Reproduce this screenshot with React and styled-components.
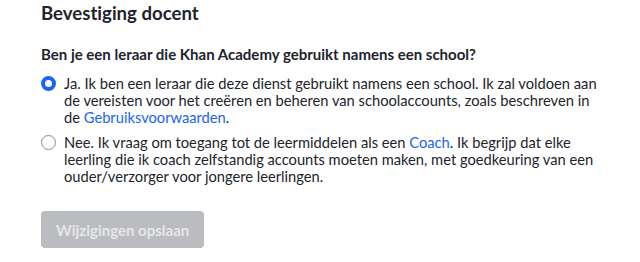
import React, { useState } from "react";
import styled, { createGlobalStyle } from "styled-components";

const GlobalStyle = createGlobalStyle`
  body {
    margin: 0;
    background: #fff;
    font-family: Lato, "Liberation Sans", sans-serif;
    font-variant-ligatures: none;
    color: #21242c;
  }
`;

const Page = styled.div`
  padding: 1px 37px 0 41px;
`;

const Title = styled.h2`
  margin: 0;
  font-size: 18.6px;
  line-height: 24px;
  font-weight: 700;
`;

const Question = styled.p`
  margin: 19px 0 0;
  font-size: 15px;
  line-height: 20px;
  font-weight: 700;
`;

const Options = styled.div`
  display: flex;
  flex-direction: column;
  gap: 8px;
  margin-top: 11px;
`;

const Option = styled.label`
  display: flex;
  gap: 8px;
  align-items: flex-start;
  font-size: 14.7px;
  line-height: 17px;
  cursor: pointer;
`;

const Radio = styled.span`
  flex: none;
  box-sizing: border-box;
  width: 15px;
  height: 15px;
  margin-top: 1px;
  border-radius: 50%;
  border: ${(p) => (p.$checked ? "4px solid #1865f2" : "1px solid #8a8c91")};
  background: #fff;
`;

const Link = styled.a`
  color: #1865f2;
  text-decoration: none;
`;

const SaveButton = styled.button`
  margin-top: 26px;
  height: 37px;
  padding: 0 15px;
  border: none;
  border-radius: 4px;
  background: #bbbcbf;
  color: #e6e7e9;
  font-family: Lato, "Liberation Sans", sans-serif;
  font-size: 15px;
  font-weight: 700;
  cursor: default;
`;

export default function App() {
  const [choice, setChoice] = useState("ja");

  return (
    <Page>
      <GlobalStyle />
      <Title>Bevestiging docent</Title>
      <Question>Ben je een leraar die Khan Academy gebruikt namens een school?</Question>
      <Options>
        <Option onClick={() => setChoice("ja")}>
          <Radio $checked={choice === "ja"} />
          <span>
            Ja. Ik ben een leraar die deze dienst gebruikt namens een school. Ik zal voldoen aan
            de vereisten voor het creëren en beheren van schoolaccounts, zoals beschreven in
            de <Link href="#">Gebruiksvoorwaarden</Link>.
          </span>
        </Option>
        <Option onClick={() => setChoice("nee")}>
          <Radio $checked={choice === "nee"} />
          <span>
            Nee. Ik vraag om toegang tot de leermiddelen als een <Link href="#">Coach</Link>. Ik
            begrijp dat elke leerling die ik coach zelfstandig accounts moeten maken, met
            goedkeuring van een ouder/verzorger voor jongere leerlingen.
          </span>
        </Option>
      </Options>
      <SaveButton disabled>Wijzigingen opslaan</SaveButton>
    </Page>
  );
}
